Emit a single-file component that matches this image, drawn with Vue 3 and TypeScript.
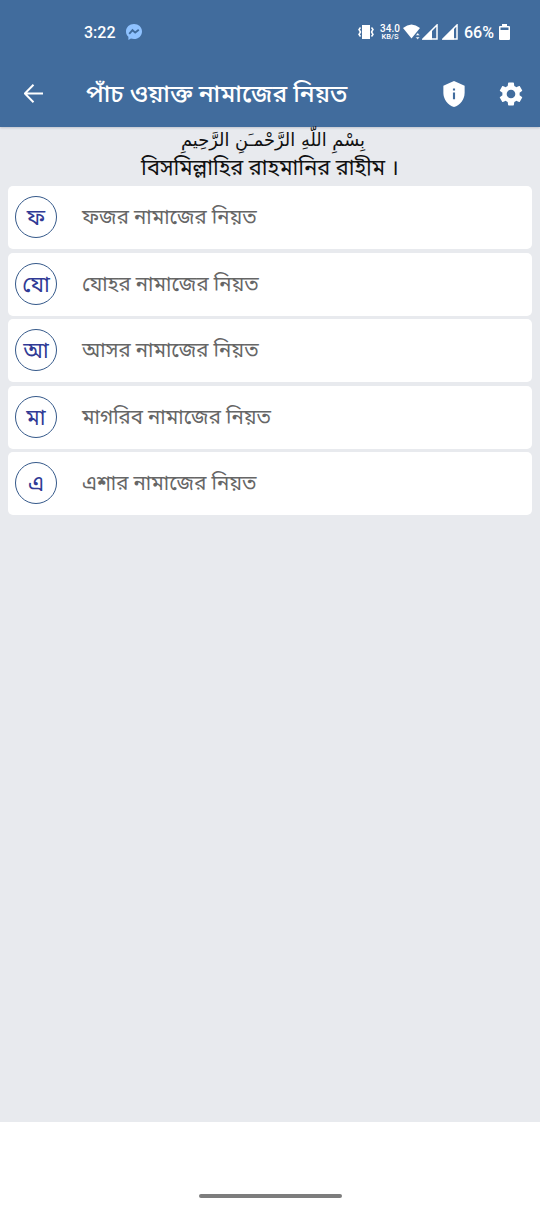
<script setup lang="ts">
interface PrayerItem {
  initial: string
  title: string
}

const prayers: PrayerItem[] = [
  { initial: 'ফ', title: 'ফজর নামাজের নিয়ত' },
  { initial: 'যো', title: 'যোহর নামাজের নিয়ত' },
  { initial: 'আ', title: 'আসর নামাজের নিয়ত' },
  { initial: 'মা', title: 'মাগরিব নামাজের নিয়ত' },
  { initial: 'এ', title: 'এশার নামাজের নিয়ত' },
]
</script>

<template>
  <div class="screen">
    <header class="top">
      <div class="status">
        <span class="time">3:22</span>
        <svg class="messenger" viewBox="0 0 16 16">
          <path d="M8 0C3.5 0 0 3.2 0 7.4c0 2.3.9 4.1 2.4 5.4V16l2.5-1.4c1 .3 2 .4 3.1.4 4.5 0 8-3.3 8-7.6S12.5 0 8 0z" fill="#8fc2ff" />
          <path d="M3.2 9.8 6.5 6.2l2.7 2.4 3.6-2.8" fill="none" stroke="#3f6b9c" stroke-width="1.9" />
        </svg>
        <span class="grow"></span>
        <svg class="vibrate" viewBox="0 0 16 16">
          <path d="M4 1h8v14H4z" fill="#fff" />
          <path d="M2.5 3.5 1 5.5 2.5 8 1 10.5 2.5 12.5M13.5 3.5l1.5 2L13.5 8l1.5 2.5-1.5 2" fill="none" stroke="#fff" stroke-width="1.5" />
        </svg>
        <span class="speed"><b>34.0</b><small>KB/S</small></span>
        <svg class="wifi" viewBox="0 0 18 16">
          <path d="M0 4Q8.5-3 17 4L8.5 14.5z" fill="#fff" />
          <path d="m12.5 11.5 2.2-2.7 2.2 2.7zm0 1.5h4.4l-2.2 2.5z" fill="#fff" stroke="#416c9d" stroke-width=".5" />
        </svg>
        <svg class="signal" viewBox="0 0 16 16"><path d="M1 15 15 1v14z" fill="none" stroke="#fff" stroke-width="1.5" /><path d="M0 15.5 10 6v9.5z" fill="#fff" /></svg>
        <svg class="signal second" viewBox="0 0 16 16"><path d="M1 15 15 1v14z" fill="none" stroke="#fff" stroke-width="1.5" /><path d="M0 15.5 12 4v11.5z" fill="#fff" /></svg>
        <span class="percent">66%</span>
        <svg class="battery" viewBox="0 0 11 16"><path d="M3 0h5v2h2q1 0 1 1v12q0 1-1 1H1q-1 0-1-1V3q0-1 1-1h2z" fill="#fff" /><path d="M1.5 3.5h8v2.5h-8z" fill="#416c9d" /></svg>
      </div>
      <div class="bar">
        <svg class="back" viewBox="4 4 16 16"><path d="M20 12H5M12 4.7 4.7 12l7.300 7.300" fill="none" stroke="#fff" stroke-width="1.7" /></svg>
        <h1>পাঁচ ওয়াক্ত নামাজের নিয়ত</h1>
        <svg class="shield" viewBox="3 1 18 22"><path d="M12 1 3 5v6c0 5.550 3.840 10.740 9 12 5.160-1.260 9-6.450 9-12V5z" fill="#fff" /><path d="M11.100 7.300h1.800v1.800h-1.800zm0 3.500h1.800v5.700h-1.800z" fill="#416c9d" /></svg>
        <svg class="gear" viewBox="2 2 20 20"><path d="M19.140 12.940c.04-.3.060-.61.060-.94 0-.32-.02-.64-.07-.94l2.030-1.580c.18-.14.230-.41.120-.61l-1.920-3.320c-.12-.22-.37-.29-.59-.22l-2.390.96c-.5-.38-1.030-.7-1.620-.94l-.36-2.540c-.04-.24-.24-.41-.48-.41h-3.840c-.24 0-.43.170-.47.410l-.36 2.540c-.59.240-1.130.57-1.620.94l-2.390-.96c-.22-.08-.47 0-.59.220L2.740 8.870c-.12.210-.08.470.12.610l2.030 1.580c-.05.3-.09.630-.09.940s.02.640.07.940l-2.030 1.580c-.18.140-.23.410-.12.610l1.920 3.320c.12.220.37.290.59.220l2.390-.96c.5.380 1.030.7 1.620.94l.36 2.540c.05.240.24.410.48.410h3.840c.24 0 .44-.17.470-.41l.36-2.540c.59-.24 1.130-.56 1.620-.94l2.390.96c.22.080.47 0 .59-.22l1.920-3.320c.12-.22.070-.47-.12-.61zM12 15.600A3.600 3.600 0 1 1 12 8.400a3.600 3.600 0 0 1 0 7.200z" fill="#fff" /></svg>
      </div>
    </header>
    <main>
      <div class="arabic" dir="rtl" lang="ar">بِسْمِ اللّهِ الرَّحْمـَنِ الرَّحِيمِ</div>
      <div class="bismillah">বিসমিল্লাহির রাহমানির রাহীম ।</div>
      <ul>
        <li v-for="p in prayers" :key="p.title">
          <span class="avatar">{{ p.initial }}</span>
          <span class="title">{{ p.title }}</span>
        </li>
      </ul>
    </main>
    <footer><div class="handle"></div></footer>
  </div>
</template>

<style scoped>
.screen {
  width: 540px;
  height: 1206px;
  display: flex;
  flex-direction: column;
  background: #e8eaee;
  font-family: Roboto, "Noto Sans Bengali", "Noto Sans", sans-serif;
  overflow: hidden;
}
.top {
  height: 127px;
  flex: none;
  background: #416c9d;
  box-shadow: 0 1px 2px rgba(50, 60, 90, 0.22);
  color: #fff;
}
.status {
  height: 64px;
  display: flex;
  align-items: center;
  padding: 0 30px 0 84px;
  box-sizing: border-box;
  font-size: 16px;
  font-weight: 500;
}
.messenger { width: 16px; height: 16px; margin-left: 10px; }
.grow { flex: 1; }
.vibrate { width: 16px; height: 16px; }
.speed {
  width: 20px;
  margin-left: 6px;
  display: flex;
  flex-direction: column;
  align-items: center;
  line-height: 7px;
}
.speed b { font-size: 10px; font-weight: 500; line-height: 8px; }
.speed small { font-size: 7.5px; font-weight: 500; }
.wifi { width: 18px; height: 16px; margin-left: 3px; }
.signal { width: 16px; height: 16px; margin-left: 1px; }
.second { margin-left: 4px; }
.percent { width: 30px; margin: 0 5px 0 6px; }
.battery { width: 11px; height: 16px; }
.bar {
  height: 59px;
  display: flex;
  align-items: center;
  padding: 0 17px 0 24px;
}
.back { width: 19px; height: 19px; }
h1 {
  flex: 1;
  margin: 0 0 0 43px;
  font-size: 24.5px;
  font-weight: 500;
  line-height: 36px;
  white-space: nowrap;
}
.shield { width: 22px; height: 26px; }
.gear { width: 24px; height: 24px; margin-left: 34px; }
main {
  flex: 1;
  text-align: center;
  color: #111;
}
.arabic { height: 27px; line-height: 25px; padding-left: 6px; font-family: "DejaVu Sans", sans-serif; font-size: 17.8px; }
.bismillah { height: 32px; line-height: 28px; font-size: 21.8px; white-space: nowrap; }
ul {
  list-style: none;
  margin: 0;
  padding: 0 8px;
  display: flex;
  flex-direction: column;
  gap: 3.5px;
}
li {
  height: 63px;
  display: flex;
  align-items: center;
  padding-left: 7px;
  background: #fff;
  border-radius: 5px;
}
.avatar {
  width: 42px;
  height: 42px;
  margin-bottom: 1px;
  box-sizing: border-box;
  border: 1px solid #35598a;
  border-radius: 50%;
  color: #303a95;
  font-size: 22px;
  line-height: 41px;
  text-align: center;
}
.title { margin-left: 25px; padding-top: 2px; font-size: 20.45px; color: #666; white-space: nowrap; }
footer {
  height: 84px;
  flex: none;
  display: flex;
  justify-content: center;
  align-items: flex-end;
  background: #fff;
}
.handle { width: 143px; height: 4px; margin-bottom: 8px; border-radius: 2px; background: #7d7d7d; }
</style>
